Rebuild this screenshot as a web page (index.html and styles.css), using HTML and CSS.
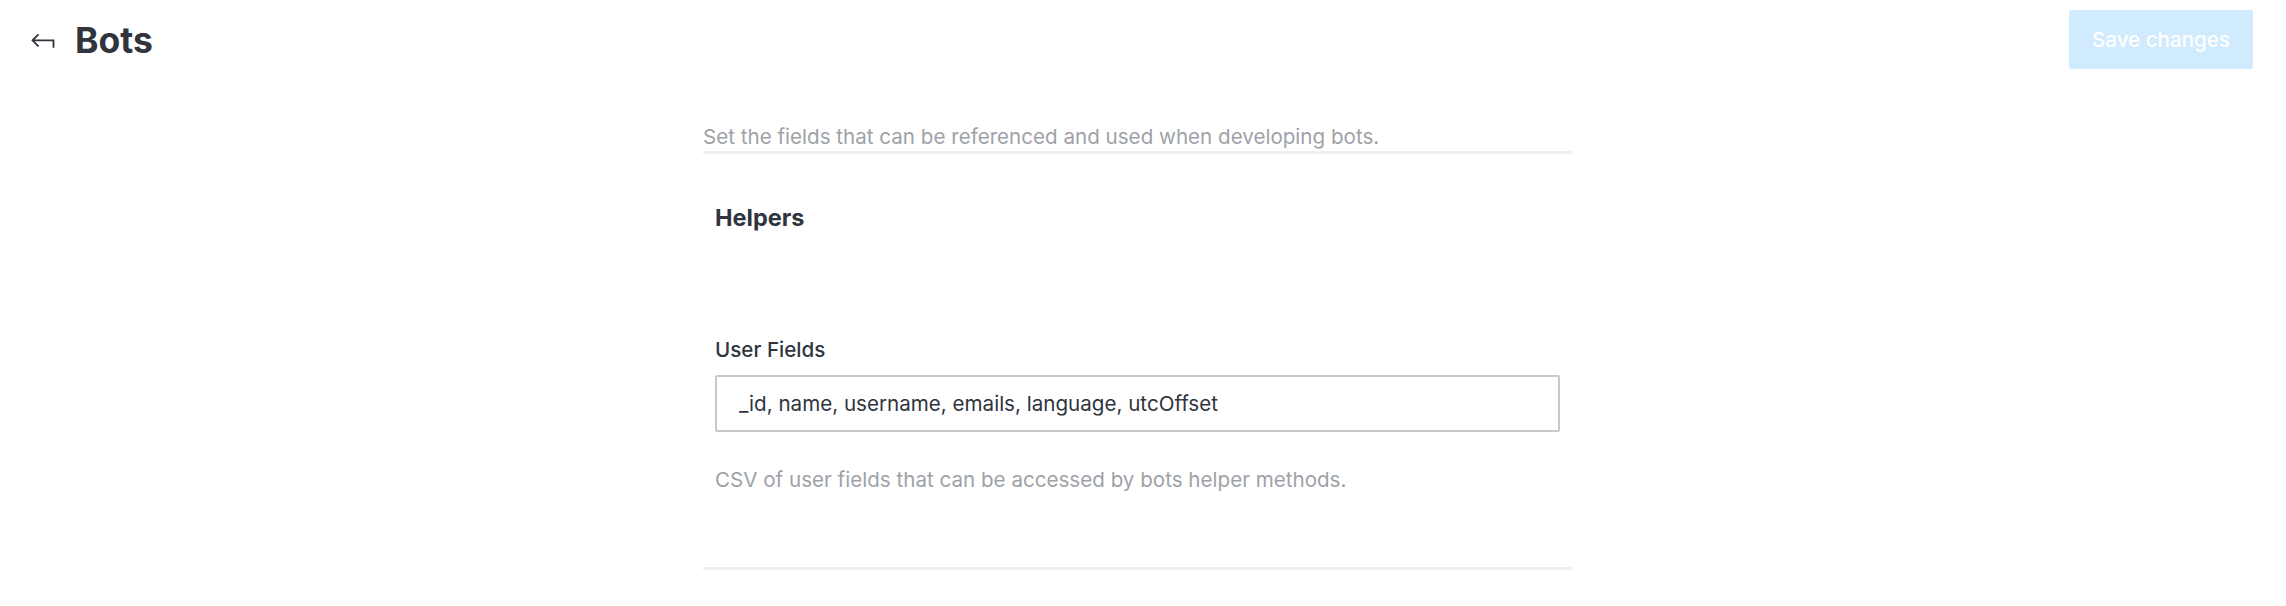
FILE: index.html
```html
<!DOCTYPE html>
<html lang="en">
<head>
<meta charset="utf-8">
<title>Bots</title>
<link rel="stylesheet" href="styles.css">
</head>
<body>
<header class="page-header">
  <button class="back-btn" type="button" aria-label="Back">
    <svg class="back-icon" viewBox="0 0 24 16" width="24" height="16">
      <path d="M7.5 1.3 L1.5 7.3 L7.5 13.3" fill="none" stroke="#2f343d" stroke-width="1.8" stroke-linejoin="miter"/>
      <path d="M1.5 7.3 H22.5 V14.8" fill="none" stroke="#2f343d" stroke-width="1.8"/>
    </svg>
  </button>
  <h1 class="page-title">Bots</h1>
  <button class="save-btn" type="button" disabled>Save changes</button>
</header>
<main class="page-body">
  <div class="content">
    <p class="section-desc">Set the fields that can be referenced and used when developing bots.</p>
    <section class="accordion-item">
      <h2 class="accordion-title">Helpers</h2>
      <div class="field">
        <label class="field-label" for="user-fields">User Fields</label>
        <input class="field-input" id="user-fields" type="text" value="_id, name, username, emails, language, utcOffset">
        <p class="field-hint">CSV of user fields that can be accessed by bots helper methods.</p>
      </div>
    </section>
  </div>
</main>
</body>
</html>
```

FILE: styles.css
```css
html, body {
  margin: 0;
  padding: 0;
  background: #ffffff;
}

body {
  font-family: Inter, "Noto Sans", "Liberation Sans", sans-serif;
  color: #2f343d;
}

.page-header {
  display: flex;
  align-items: center;
  height: 59px;
  padding: 10px 33px 10px 31px;
}

.back-btn {
  display: flex;
  align-items: center;
  padding: 0;
  margin: 2px 0 0 0;
  border: 0;
  background: transparent;
  cursor: pointer;
}

.back-icon {
  display: block;
}

.page-title {
  margin: 0 0 0 20px;
  padding-top: 2px;
  font-size: 35.5px;
  line-height: 44px;
  font-weight: 700;
  color: #2f343d;
}

.save-btn {
  margin-left: auto;
  width: 184px;
  height: 59px;
  padding: 0;
  border: 0;
  border-radius: 3px;
  background: #d1ebfe;
  color: #ffffff;
  font-family: inherit;
  font-size: 20.6px;
  font-weight: 500;
}

.page-body {
  padding: 44px 11px 0 0;
}

.content {
  width: 869px;
  margin: 0 auto;
}

.section-desc {
  margin: 0;
  font-size: 20.6px;
  line-height: 28px;
  color: #9ea2a8;
}

.accordion-item {
  border-top: 3px solid #eeeff1;
  border-bottom: 3px solid #eeeff1;
  padding: 48px 12px 73px 12px;
}

.accordion-title {
  margin: 0;
  font-size: 23.5px;
  line-height: 32px;
  font-weight: 700;
  color: #2f343d;
}

.field {
  display: flex;
  flex-direction: column;
  margin-top: 102px;
}

.field-label {
  font-size: 20.6px;
  line-height: 28px;
  font-weight: 500;
  color: #2f343d;
}

.field-input {
  margin-top: 11px;
  height: 57px;
  box-sizing: border-box;
  padding: 0 22px;
  border: 2px solid #c6c9cd;
  border-radius: 2px;
  font-family: inherit;
  font-size: 20.6px;
  color: #2f343d;
  background: #ffffff;
  outline: none;
}

.field-hint {
  margin: 34px 0 0 0;
  font-size: 20.6px;
  line-height: 28px;
  color: #9ea2a8;
}
```
